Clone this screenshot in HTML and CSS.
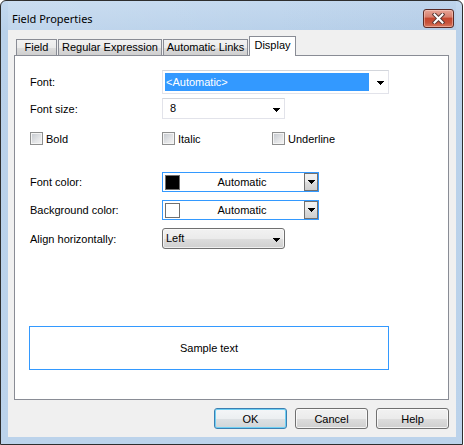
FILE: index.html
```html
<!DOCTYPE html>
<html>
<head>
<meta charset="utf-8">
<title>Field Properties</title>
<link rel="stylesheet" href="styles.css">
</head>
<body>
<div class="window">
  <div class="titlebar">
    <span class="title">Field Properties</span>
    <button class="close" aria-label="Close">
      <svg width="13" height="11" viewBox="0 0 13 11">
        <path d="M2.5 1.5 L10.5 9.5 M10.5 1.5 L2.5 9.5" stroke="#5b3a36" stroke-width="4" stroke-linecap="square" fill="none"/>
        <path d="M2.5 1.5 L10.5 9.5 M10.5 1.5 L2.5 9.5" stroke="#ffffff" stroke-width="2" stroke-linecap="square" fill="none"/>
      </svg>
    </button>
  </div>
  <div class="client">
    <div class="tabs">
      <div class="tab tab-field">Field</div>
      <div class="tab tab-regex">Regular Expression</div>
      <div class="tab tab-links">Automatic Links</div>
      <div class="tab tab-display active">Display</div>
    </div>
    <div class="panel">
      <div class="row row-font">
        <span class="lbl">Font:</span>
        <div class="combo combo-edit combo-wide">
          <span class="sel">&lt;Automatic&gt;</span>
          <span class="drop"><svg class="arrow" width="7" height="4" viewBox="0 0 7 4"><path d="M0 0h7v1h-1v1h-1v1h-1v1h-1v-1h-1v-1h-1v-1h-1z" fill="#000"/></svg></span>
        </div>
      </div>
      <div class="row row-size">
        <span class="lbl">Font size:</span>
        <div class="combo combo-edit combo-mid">
          <span class="val">8</span>
          <span class="drop"><svg class="arrow" width="7" height="4" viewBox="0 0 7 4"><path d="M0 0h7v1h-1v1h-1v1h-1v1h-1v-1h-1v-1h-1v-1h-1z" fill="#000"/></svg></span>
        </div>
      </div>
      <div class="row row-checks">
        <label class="check check-1"><span class="box"></span><span>Bold</span></label>
        <label class="check check-2"><span class="box"></span><span>Italic</span></label>
        <label class="check"><span class="box"></span><span>Underline</span></label>
      </div>
      <div class="row row-fcolor">
        <span class="lbl">Font color:</span>
        <div class="ccombo">
          <span class="swatch swatch-black"></span>
          <span class="ctext">Automatic</span>
          <span class="cbtn"><svg class="arrow" width="7" height="4" viewBox="0 0 7 4"><path d="M0 0h7v1h-1v1h-1v1h-1v1h-1v-1h-1v-1h-1v-1h-1z" fill="#000"/></svg></span>
        </div>
      </div>
      <div class="row row-bcolor">
        <span class="lbl">Background color:</span>
        <div class="ccombo">
          <span class="swatch swatch-white"></span>
          <span class="ctext">Automatic</span>
          <span class="cbtn"><svg class="arrow" width="7" height="4" viewBox="0 0 7 4"><path d="M0 0h7v1h-1v1h-1v1h-1v1h-1v-1h-1v-1h-1v-1h-1z" fill="#000"/></svg></span>
        </div>
      </div>
      <div class="row row-align">
        <span class="lbl">Align horizontally:</span>
        <div class="combo combo-list combo-mid">
          <span class="val">Left</span>
          <span class="drop"><svg class="arrow" width="7" height="4" viewBox="0 0 7 4"><path d="M0 0h7v1h-1v1h-1v1h-1v1h-1v-1h-1v-1h-1v-1h-1z" fill="#000"/></svg></span>
        </div>
      </div>
      <div class="sample">Sample text</div>
    </div>
    <div class="buttons">
      <button class="btn btn-default">OK</button>
      <button class="btn">Cancel</button>
      <button class="btn">Help</button>
    </div>
  </div>
</div>
</body>
</html>
```
FILE: styles.css
```css
* { box-sizing: border-box; }
html, body { margin: 0; padding: 0; }
body {
  width: 464px;
  height: 445px;
  background: #ffffff;
  font-family: "Liberation Sans", Arial, sans-serif;
  font-size: 11px;
  color: #000;
  overflow: hidden;
}

.window {
  width: 463px;
  height: 445px;
  border: 1px solid #2e2e2e;
  border-radius: 6px 6px 0 0;
  background: linear-gradient(180deg, #c4d9ef 0px, #b9d1ea 30px, #bcd3eb 100%);
  padding: 0 6px 7px 7px;
  display: flex;
  flex-direction: column;
}

.titlebar {
  height: 29px;
  flex: none;
  display: flex;
  justify-content: space-between;
  align-items: flex-start;
  padding-left: 4px;
  background: linear-gradient(90deg, rgba(255,255,255,0.12), rgba(255,255,255,0) 60%, rgba(120,150,190,0.08));
}
.title {
  margin-top: 10px;
  font-family: "Noto Sans", "Liberation Sans", sans-serif;
  font-size: 11px;
  line-height: 16px;
  color: #000;
}
.close {
  margin-top: 8px;
  margin-right: 2px;
  width: 31px;
  height: 19px;
  padding: 0;
  border: 1px solid #5a2b26;
  border-radius: 3px;
  background: linear-gradient(180deg, #e7a597 0%, #d7806f 40%, #c5472f 50%, #c8533b 75%, #d7785e 100%);
  box-shadow: inset 0 0 0 1px rgba(255, 220, 210, 0.45);
  display: flex;
  align-items: center;
  justify-content: center;
}
.close svg { display: block; }

.client {
  flex: 1;
  background: #f0f0f0;
  padding: 6px 7px 0 6px;
  display: flex;
  flex-direction: column;
}

.tabs {
  height: 19px;
  display: flex;
  align-items: flex-end;
  padding-left: 2px;
  position: relative;
  z-index: 1;
}
.tab {
  flex: none;
  height: 16px;
  padding: 0;
  border: 1px solid #898c95;
  border-bottom: none;
  margin-right: 1px;
  background: linear-gradient(180deg, #f2f2f2 0%, #ebebeb 50%, #dddddd 51%, #cfcfcf 100%);
  line-height: 15px;
  text-align: center;
  white-space: nowrap;
}
.tab-field { width: 41px; }
.tab-regex { width: 104px; }
.tab-links { width: 85px; }
.tab-display { width: 47px; }
.tab.active {
  height: 20px;
  margin-bottom: -1px;
  padding: 1px 0 3px;
  background: #ffffff;
}

.panel {
  height: 345px;
  flex: none;
  border: 1px solid #898c95;
  background: #ffffff;
  padding: 14px 0 0 15px;
  display: flex;
  flex-direction: column;
}

.row {
  display: flex;
  align-items: center;
}
.lbl {
  width: 132px;
  flex: none;
}
.row-size { margin-top: 4px; }
.row-checks { margin-top: 13px; }
.row-fcolor { margin-top: 27px; }
.row-bcolor { margin-top: 8px; }
.row-align { margin-top: 8px; }

.combo {
  display: flex;
  align-items: center;
  background: #fff;
}
.combo-edit {
  border: 1px solid #e2e3ea;
  border-top-color: #d3d6dc;
}
.combo-wide { width: 227px; height: 24px; }
.combo-mid { width: 123px; height: 21px; }
.sel {
  flex: 1;
  height: 18px;
  margin-left: 2px;
  margin-right: 2px;
  padding-left: 1px;
  background: #3399ff;
  color: #fff;
  line-height: 18px;
}
.val {
  flex: 1;
  line-height: 19px;
}
.combo-edit .val { padding-left: 7px; }
.combo-list .val { padding-left: 3px; }
.drop {
  width: 17px;
  flex: none;
  display: flex;
  justify-content: flex-end;
  padding-right: 4px;
}
.arrow { display: block; margin-top: 2px; }

.combo-list {
  border: 1px solid #707070;
  border-radius: 3px;
  background: linear-gradient(180deg, #f2f2f2 0%, #ebebeb 50%, #dddddd 51%, #cfcfcf 100%);
  box-shadow: inset 0 0 0 1px rgba(252, 252, 252, 0.7);
}

.check {
  display: flex;
  align-items: center;
  gap: 2px;
  height: 13px;
}
.check-1 { width: 132px; }
.check-2 { width: 110px; }
.box {
  width: 13px;
  height: 13px;
  flex: none;
  border: 1px solid #8e8f8f;
  background: linear-gradient(135deg, #c3c7cd 0%, #e4e5e7 60%, #f4f4f4 100%);
  box-shadow: inset 0 0 0 1px #f4f4f4;
  margin-right: 1px;
}

.ccombo {
  width: 157px;
  height: 20px;
  border: 1px solid #3399ff;
  display: flex;
  align-items: center;
  background: #fff;
}
.swatch {
  width: 15px;
  height: 15px;
  margin-left: 2px;
  border: 1px solid #6f6f6f;
  flex: none;
}
.swatch-black { background: #000; }
.swatch-white { background: #fff; }
.ctext {
  flex: 1;
  text-align: center;
}
.cbtn {
  width: 14px;
  height: 18px;
  flex: none;
  border: 1px solid #707070;
  background: linear-gradient(180deg, #f2f2f2 0%, #ebebeb 50%, #dddddd 51%, #cfcfcf 100%);
  display: flex;
  align-items: center;
  justify-content: center;
}
.cbtn .arrow { margin-top: 0; }

.sample {
  margin-top: 77px;
  margin-left: -1px;
  width: 360px;
  height: 44px;
  border: 1px solid #3399ff;
  display: flex;
  align-items: center;
  justify-content: center;
}

.buttons {
  margin-top: 8px;
  display: flex;
  justify-content: flex-end;
  gap: 8px;
}
.btn {
  width: 73px;
  height: 21px;
  padding: 0;
  font: inherit;
  color: #000;
  border: 1px solid #707070;
  border-radius: 3px;
  background: linear-gradient(180deg, #f2f2f2 0%, #ebebeb 50%, #dddddd 51%, #cfcfcf 100%);
  box-shadow: inset 0 0 0 1px rgba(252, 252, 252, 0.8);
}
.btn-default {
  border-color: #3c7fb1;
  box-shadow: inset 0 0 0 1px #6fd0f4;
  background: linear-gradient(180deg, #f4f6f8 0%, #eceff1 50%, #dde1e4 51%, #d0d5d8 100%);
}
```
